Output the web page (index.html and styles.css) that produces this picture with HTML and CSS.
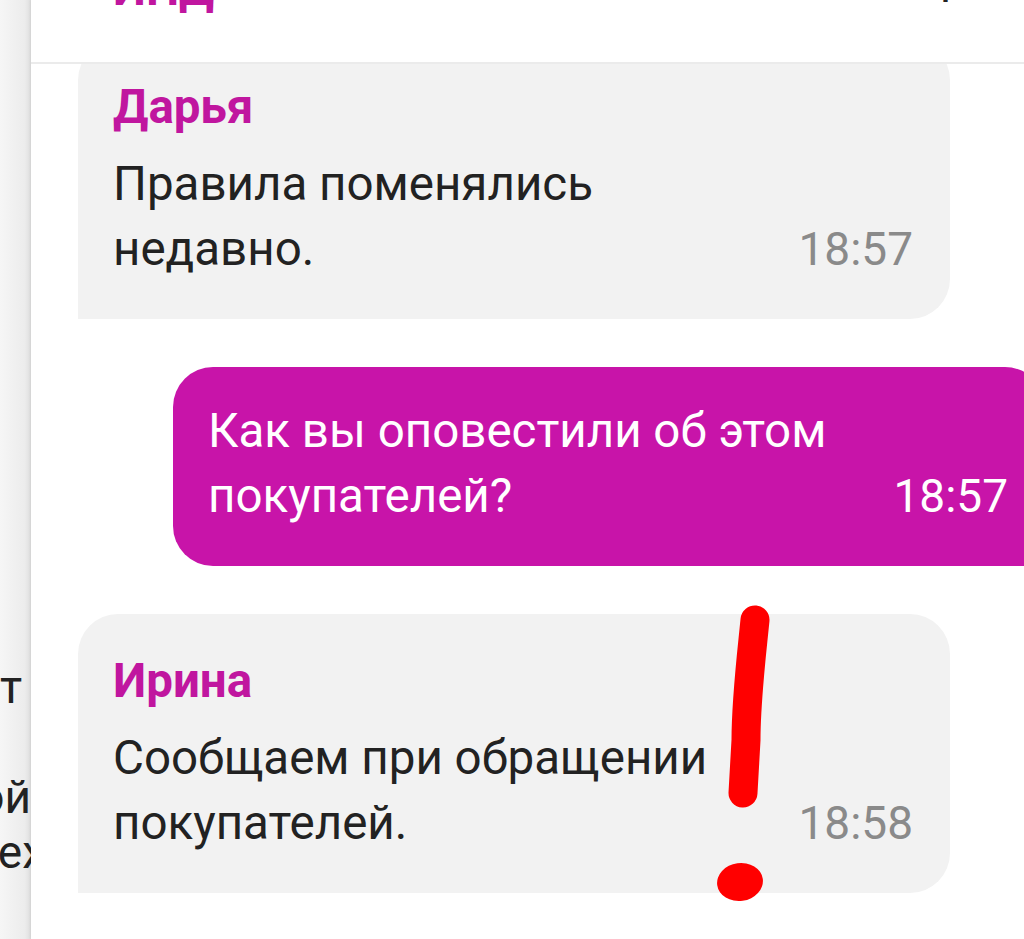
FILE: index.html
```html
<!DOCTYPE html>
<html lang="ru">
<head>
    <meta charset="UTF-8">
    <meta name="viewport" content="width=device-width, initial-scale=1.0">
    <title>Чат</title>
    <link rel="stylesheet" href="styles.css">
</head>
<body>
    <div class="side">
        <div class="side-line"><span>т</span></div>
        <div class="side-line"></div>
        <div class="side-line"><span class="cut">ой</span></div>
        <div class="side-line"><span class="cut-more">ех</span></div>
    </div>

    <div class="chat">
        <div class="header">
            <span class="title">ИПД</span>
            <span class="menu">р</span>
        </div>

        <div class="messages">
            <div class="bubble incoming first">
                <div class="author">Дарья</div>
                <div class="body">
                    <p class="text">Правила поменялись недавно.</p>
                    <span class="time">18:57</span>
                </div>
            </div>

            <div class="bubble outgoing">
                <div class="body">
                    <p class="text">Как вы оповестили об этом покупателей?</p>
                    <span class="time">18:57</span>
                </div>
            </div>

            <div class="bubble incoming">
                <div class="author">Ирина</div>
                <div class="body">
                    <p class="text">Сообщаем при обращении покупателей.</p>
                    <span class="time">18:58</span>
                </div>
            </div>
        </div>
    </div>

    <svg class="mark" width="1024" height="939" viewBox="0 0 1024 939">
        <path d="M755 620 C 751 660, 746 700, 746 740 L 743 793" fill="none" stroke="#ff0000" stroke-width="29" stroke-linecap="round"/>
        <ellipse cx="740" cy="882" rx="23" ry="19" transform="rotate(-8 740 882)" fill="#ff0000"/>
    </svg>
</body>
</html>
```

FILE: styles.css
```css
body {
    margin: 0;
    padding: 0;
    height: 939px;
    display: flex;
    overflow: hidden;
    font-family: Roboto, "Noto Sans", sans-serif;
    background-color: #ffffff;
}

.side {
    width: 31px;
    flex-shrink: 0;
    overflow: hidden;
    padding-top: 660px;
    background: linear-gradient(to right, #f6f6f6, #ececec 80%, #dedede);
    color: #222;
    font-size: 46px;
    line-height: 55px;
}

.side-line {
    display: flex;
    justify-content: flex-end;
    height: 55px;
    white-space: nowrap;
}

.side-line span {
    margin-right: 9px;
}

.side-line .cut {
    margin-right: 0;
}

.side-line .cut-more {
    margin-right: -14px;
}

.chat {
    flex: 1;
    overflow: hidden;
    background: white;
    box-shadow: -1px 0 2px rgba(0, 0, 0, 0.06);
}

.header {
    height: 62px;
    border-bottom: 2px solid #ebebeb;
    display: flex;
    justify-content: space-between;
    align-items: flex-start;
    overflow: hidden;
    padding: 0 58px 0 82px;
    position: relative;
    z-index: 1;
    background: white;
}

.title {
    margin-top: -34px;
    font-size: 47px;
    line-height: 46px;
    font-weight: 700;
    color: #c0169f;
}

.menu {
    margin-top: -46px;
    font-size: 46px;
    line-height: 46px;
    color: #222;
}

.messages {
    display: flex;
    flex-direction: column;
    gap: 48px;
    padding-left: 47px;
}

.bubble {
    width: 872px;
    box-sizing: border-box;
    padding: 42px 37px 37px 35px;
}

.bubble.first {
    margin-top: -24px;
}

.incoming {
    background: #f2f2f2;
    border-radius: 40px 40px 40px 0;
    color: #222;
}

.outgoing {
    align-self: flex-end;
    margin-right: -21px;
    padding-top: 32px;
    background: #c814a9;
    border-radius: 40px 40px 0 40px;
    color: white;
}

.author {
    font-size: 47.5px;
    line-height: 50px;
    font-weight: 700;
    color: #c0169f;
    margin-bottom: 20px;
}

.body {
    display: flex;
    align-items: last baseline;
    justify-content: space-between;
}

.text {
    margin: 0;
    max-width: 660px;
    font-size: 47.5px;
    line-height: 65px;
}

.time {
    font-size: 46px;
    line-height: 65px;
    color: #8a8a8a;
}

.outgoing .time {
    color: white;
}

.mark {
    position: absolute;
    top: 0;
    left: 0;
    pointer-events: none;
}
```
